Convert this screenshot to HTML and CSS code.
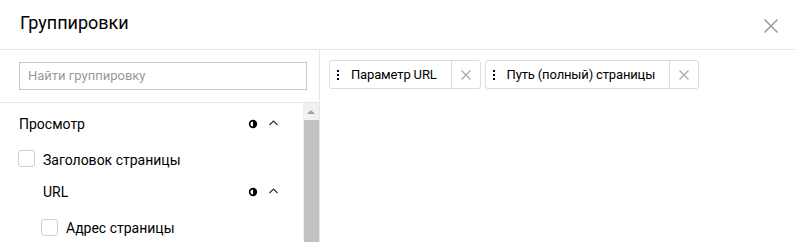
FILE: index.html
```html
<!DOCTYPE html>
<html>
<head>
<meta charset="utf-8">
<link rel="stylesheet" href="styles.css">
</head>
<body>
<div class="modal">
  <div class="header">
    <div class="title">Группировки</div>
    <svg class="close" width="14" height="14" viewBox="0 0 14 14"><path d="M0.5 0.5L13.5 13.5M13.5 0.5L0.5 13.5" stroke="#9a9a9a" stroke-width="1.5" fill="none"/></svg>
  </div>
  <div class="body">
    <div class="left">
      <div class="search">
        <div class="input">Найти группировку</div>
      </div>
      <div class="listwrap">
        <div class="list">
          <div class="group lvl0">
            <span class="gname">Просмотр</span>
            <span class="icons">
              <svg width="10" height="10" viewBox="0 0 10 10"><circle cx="5" cy="5" r="4.2" fill="#000"/><path d="M5 2.5A2.5 2.5 0 0 0 5 7.5Z" fill="#fff"/></svg>
              <svg class="chev" width="9" height="6" viewBox="0 0 9 6"><polyline points="0.5,5 4.5,1 8.5,5" fill="none" stroke="#333" stroke-width="1.2"/></svg>
            </span>
          </div>
          <div class="item lvl0"><span class="cb"></span><span>Заголовок страницы</span></div>
          <div class="group lvl1">
            <span class="gname">URL</span>
            <span class="icons">
              <svg width="10" height="10" viewBox="0 0 10 10"><circle cx="5" cy="5" r="4.2" fill="#000"/><path d="M5 2.5A2.5 2.5 0 0 0 5 7.5Z" fill="#fff"/></svg>
              <svg class="chev" width="9" height="6" viewBox="0 0 9 6"><polyline points="0.5,5 4.5,1 8.5,5" fill="none" stroke="#333" stroke-width="1.2"/></svg>
            </span>
          </div>
          <div class="item lvl1"><span class="cb"></span><span>Адрес страницы</span></div>
        </div>
        <div class="scrollbar">
          <div class="arrow"></div>
          <div class="thumb"></div>
        </div>
      </div>
    </div>
    <div class="right">
      <div class="chip">
        <span class="dots"><i></i><i></i><i></i></span>
        <span class="label">Параметр URL</span>
        <span class="remove"><svg width="10" height="10" viewBox="0 0 10 10"><path d="M0.5 0.5L9.5 9.5M9.5 0.5L0.5 9.5" stroke="#a8a8a8" stroke-width="1.2" fill="none"/></svg></span>
      </div>
      <div class="chip">
        <span class="dots"><i></i><i></i><i></i></span>
        <span class="label">Путь (полный) страницы</span>
        <span class="remove"><svg width="10" height="10" viewBox="0 0 10 10"><path d="M0.5 0.5L9.5 9.5M9.5 0.5L0.5 9.5" stroke="#a8a8a8" stroke-width="1.2" fill="none"/></svg></span>
      </div>
    </div>
  </div>
</div>
</body>
</html>
```
FILE: styles.css
```css
html, body {
  margin: 0;
  padding: 0;
  background: #fff;
}
body {
  font-family: Roboto, "Liberation Sans", Arial, sans-serif;
  color: #000;
  width: 795px;
  height: 242px;
  overflow: hidden;
}
.modal {
  display: flex;
  flex-direction: column;
  height: 242px;
}
.header {
  box-sizing: border-box;
  border-bottom: 1px solid #e6e6e6;
  height: 50px;
  display: flex;
  justify-content: space-between;
  align-items: flex-start;
  padding: 11px 17px 0 20px;
}
.title {
  font-size: 18px;
  line-height: 24px;
}
.close {
  margin-top: 8px;
  display: block;
}
.body {
  flex: 1;
  display: flex;
  min-height: 0;
}
.left {
  width: 320px;
  box-sizing: border-box;
  border-right: 1px solid #e6e6e6;
  display: flex;
  flex-direction: column;
}
.search {
  height: 53px;
  box-sizing: border-box;
  padding: 12px 0 0 19px;
  border-bottom: 1px solid #e6e6e6;
}
.input {
  width: 288px;
  height: 28px;
  box-sizing: border-box;
  border: 1px solid #c8c8c8;
  font-size: 13px;
  line-height: 26px;
  color: #999;
  padding-left: 8px;
}
.listwrap {
  flex: 1;
  display: flex;
  min-height: 0;
}
.list {
  flex: 1;
  padding-top: 5px;
  font-size: 14px;
}
.group {
  height: 32px;
  display: flex;
  align-items: center;
  justify-content: space-between;
  padding-right: 25px;
}
.group.lvl0 { padding-left: 19px; }
.group.lvl1 { padding-left: 43px; }
.icons {
  display: flex;
  align-items: center;
  gap: 11px;
}
.icons svg { display: block; }
.chev { margin-top: -2px; }
.item {
  margin-top: 4px;
  height: 32px;
  display: flex;
  align-items: center;
  gap: 8px;
}
.item.lvl0 { padding-left: 18px; }
.item.lvl1 { padding-left: 41px; }
.cb {
  width: 17px;
  height: 17px;
  box-sizing: border-box;
  border: 1px solid #cfcfcf;
  border-radius: 3px;
  margin-top: -3px;
}
.item.lvl1 .cb { margin-top: -1px; }
.scrollbar {
  width: 16px;
  background: #f1f1f1;
  display: flex;
  flex-direction: column;
  align-items: center;
}
.arrow {
  margin-top: 7px;
  width: 0;
  height: 0;
  border-left: 4px solid transparent;
  border-right: 4px solid transparent;
  border-bottom: 4px solid #a3a3a3;
}
.thumb {
  margin-top: 6px;
  width: 15px;
  flex: 1;
  background: #c1c1c1;
}
.right {
  flex: 1;
  display: flex;
  align-items: flex-start;
  gap: 4px;
  padding: 10px 0 0 9px;
}
.chip {
  height: 29px;
  box-sizing: border-box;
  border: 1px solid #dcdcdc;
  border-radius: 3px;
  display: flex;
  align-items: center;
  font-size: 13px;
}
.dots {
  display: flex;
  flex-direction: column;
  gap: 2px;
  margin-left: 7px;
  margin-right: 12px;
}
.dots i {
  display: block;
  width: 2px;
  height: 2px;
  background: #000;
}
.label {
  padding-right: 14px;
  letter-spacing: -0.15px;
}
.remove {
  align-self: stretch;
  width: 28px;
  border-left: 1px solid #dcdcdc;
  display: flex;
  align-items: center;
  justify-content: center;
}
.remove svg { display: block; }
```
